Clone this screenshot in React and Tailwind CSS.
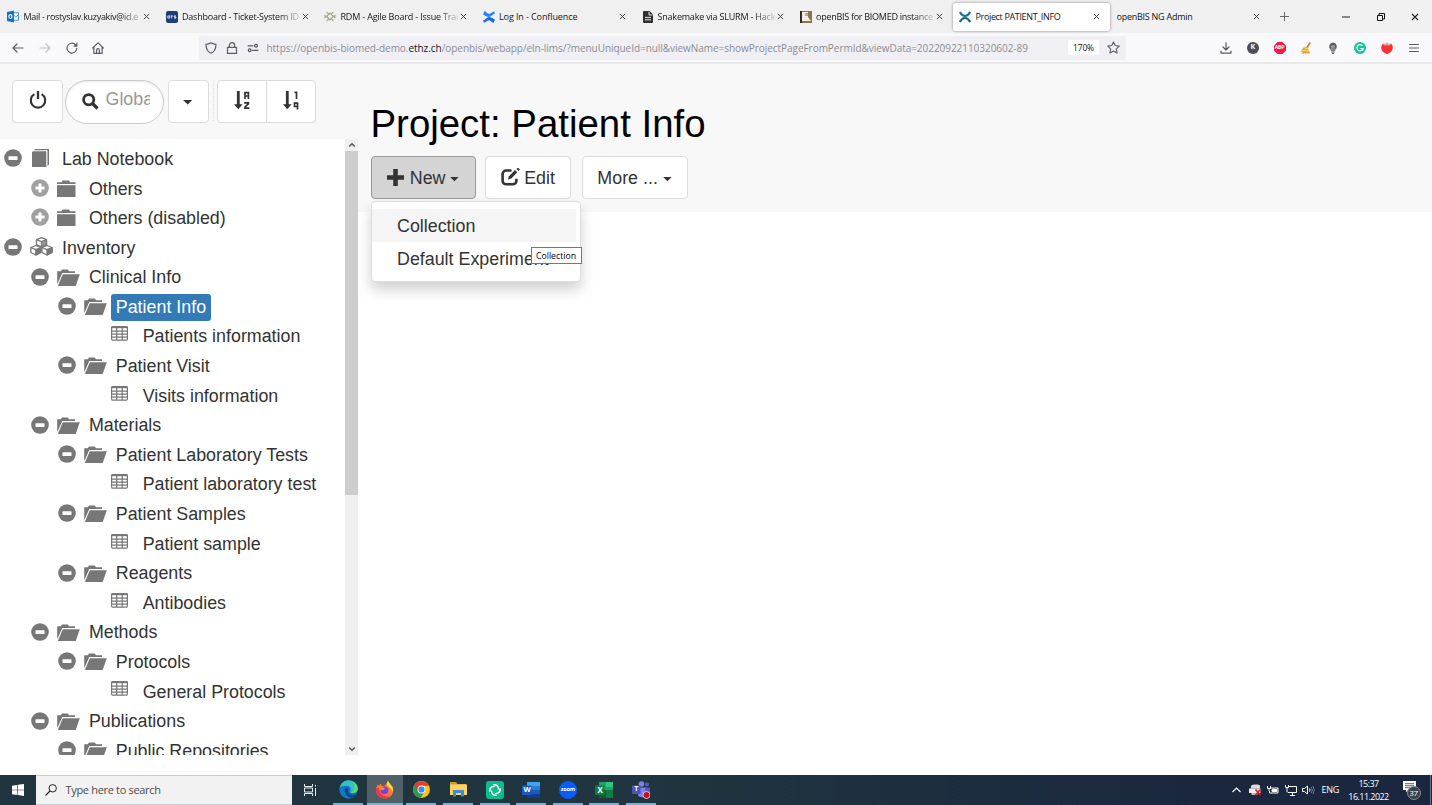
import React from "react";

const UI = "font-['Open_Sans','Noto_Sans',sans-serif]";

/* ---------- shared glyphs ---------- */

function Close({ className = "" }) {
  return (
    <svg viewBox="0 0 8 8" className={`h-[7px] w-[7px] shrink-0 ${className}`}>
      <path d="M1 1l6 6M7 1L1 7" stroke="currentColor" strokeWidth="1.1" fill="none" />
    </svg>
  );
}

function Caret({ className = "" }) {
  return (
    <svg viewBox="0 0 10 5" className={`h-[4.6px] w-[9.4px] shrink-0 ${className}`}>
      <path d="M0 0h10L5 5z" fill="currentColor" />
    </svg>
  );
}

/* ---------- favicons ---------- */

const Outlook = () => (
  <svg viewBox="0 0 13 13" className="h-[13px] w-[13px]">
    <path d="M6 2.5h6.5v8H6z" fill="#fff" stroke="#1479cf" strokeWidth=".9" />
    <path d="M6.5 4.5L9.5 7l3-2.5" stroke="#1479cf" fill="none" strokeWidth=".9" />
    <path d="M0 1.5L7.5 0v13L0 11.5z" fill="#0a72c8" />
    <ellipse cx="3.7" cy="6.6" rx="1.7" ry="2.1" fill="none" stroke="#fff" strokeWidth="1.2" />
  </svg>
);

const Ots = () => (
  <span className="flex h-3 w-3 items-center justify-center rounded-[2px] bg-[#1e3d7b]">
    <svg viewBox="0 0 10 4" className="h-1 w-[10px]">
      <path d="M.8.9h1.8v2.2H.8zM3.6.9h2.2M4.7.9v2.5M9 .9H7.2v1.1H9v1.1H7" fill="none" stroke="#fff" strokeWidth=".8" />
    </svg>
  </span>
);

const Rdm = () => (
  <svg viewBox="0 0 14 13" className="h-[13px] w-[13px]" fill="none" stroke="#9aa87a" strokeWidth="1.3">
    <path d="M7 2.5l4 4-4 4-4-4z" />
    <path d="M3 1.5l2.5 2M11 1.5l-2.5 2M3 11.5l2.5-2M11 11.5l-2.5-2M.5 5l2 1.5-2 1.5M13.5 5l-2 1.5 2 1.5" />
  </svg>
);

const Confluence = () => (
  <svg viewBox="0 0 12 12" className="h-3 w-3">
    <path d="M1.6 0L0 3.2c3 2 5 3 6.6 2.6C8.600 5.400 9.500 3.500 12 2.600L11 .2C8.500 1.500 7 3 5.600 2.800 4.300 2.500 3.400 1 1.600 0z" fill="#2684ff" />
    <path d="M10.400 12L12 8.800c-3-2-5-3-6.600-2.600C3.400 6.600 2.500 8.500 0 9.400l1 2.400C3.500 10.500 5 9 6.400 9.200c1.300.3 2.200 1.800 4 2.800z" fill="#1868f0" />
  </svg>
);

const Doc = () => (
  <svg viewBox="0 0 10 12" className="ml-[1px] h-3 w-[10px]">
    <path d="M1 0h5.500L10 3.500V11a1 1 0 0 1-1 1H1a1 1 0 0 1-1-1V1a1 1 0 0 1 1-1z" fill="#2f2f2f" />
    <path d="M6 .8V4h3.300M2 6.400h6M2 8.800h6" stroke="#eee" strokeWidth="1" fill="none" />
  </svg>
);

const Biomed = () => (
  <svg viewBox="0 0 12 12" className="h-3 w-3">
    <path d="M0 0h12v12H0z" fill="#8a7450" />
    <path d="M2 1h6v9H2z" fill="#f3f1ea" />
    <path d="M0 0h2v12H0z" fill="#2e2a25" />
    <path d="M5 2h3v3H5z" fill="#b9a88a" />
    <path d="M8 6l3 4H7z" fill="#efeadf" />
  </svg>
);

const OpenBis = ({ className = "" }) => (
  <svg viewBox="0 0 12 12" className={`h-3 w-3 ${className}`} fill="none" strokeWidth="2.200">
    <path d="M.8 1c1.800 3 3.500 4 5.200 4S9.400 4 11.200 1" stroke="#1a7199" />
    <path d="M.8 11C2.600 8 4.300 7 6 7s3.400 1 5.200 4" stroke="#155f80" />
  </svg>
);

/* ---------- browser chrome ---------- */

const TABS = [
  { icon: <Outlook />, label: "Mail - rostyslav.kuzyakiv@id.e", fade: true, track: "tracking-[-0.3px]" },
  { icon: <Ots />, label: "Dashboard - Ticket-System ID-", fade: true, track: "tracking-[-0.23px]" },
  { icon: <Rdm />, label: "RDM - Agile Board - Issue Trac", fade: true, track: "tracking-[-0.18px]" },
  { icon: <Confluence />, label: "Log In - Confluence", track: "tracking-[-0.1px]" },
  { icon: <Doc />, label: "Snakemake via SLURM - Hack", fade: true, track: "tracking-[-0.2px]" },
  { icon: <Biomed />, label: "openBIS for BIOMED instance", fade: true, track: "tracking-[-0.27px]" },
  { icon: <OpenBis />, label: "Project PATIENT_INFO", active: true, track: "tracking-[-0.35px]" },
  { label: "openBIS NG Admin", track: "tracking-[-0.25px]" },
];

function Tab({ icon, label, fade, active, track }) {
  return (
    <div
      className={`flex h-7 shrink-0 items-center pr-[9.500px] pl-[6px] ${
        active ? "relative z-10 mx-px w-[156.500px] rounded-[3px] bg-white shadow-[0_0_3px_rgba(0,0,0,.45)]" : "w-[158.500px]"
      }`}
    >
      {icon && <span className="mr-[4.500px] flex w-3 shrink-0 justify-center">{icon}</span>}
      <span
        className={`min-w-0 flex-1 overflow-hidden whitespace-nowrap text-[9px] text-[#15141a] ${track} ${
          fade ? "[mask-image:linear-gradient(to_right,black_82%,rgba(0,0,0,.15))]" : ""
        }`}
      >
        {label}
      </span>
      <Close className="ml-[2px] text-[#3b3b42]" />
    </div>
  );
}

function TabBar() {
  return (
    <div className="flex h-[33px] items-center bg-[#f0f0f0] pl-px">
      {TABS.map((t) => (
        <Tab key={t.label} {...t} />
      ))}
      <div className="flex flex-1 items-center pl-[10px]">
        <svg viewBox="0 0 10 10" className="ml-[1px] h-[9px] w-[9px]" stroke="#55555c" fill="none">
          <path d="M5 0v10M0 5h10" />
        </svg>
        <svg viewBox="0 0 8 8" className="ml-[53px] h-2 w-2" stroke="#222" fill="none">
          <path d="M0 4h8" />
        </svg>
        <svg viewBox="0 0 8 8" className="ml-[26.500px] h-2 w-2" stroke="#111" fill="none">
          <path d="M.5 2.500h5v5h-5zM2 2V.5h5.500V6H6" />
        </svg>
        <Close className="ml-[26px] h-2! w-2! text-[#222]" />
      </div>
    </div>
  );
}

function NavBar() {
  const s = { fill: "none", stroke: "#5b5b66", strokeWidth: 1.2, strokeLinecap: "round", strokeLinejoin: "round" };
  return (
    <div className="flex h-[31px] items-center border-b-2 border-[#e9e9ec] bg-[#f9f9fb] pl-3">
      <svg viewBox="0 0 12 12" className="h-3 w-3" {...s}><path d="M11 6H1M5 2L1 6l4 4" /></svg>
      <svg viewBox="0 0 12 12" className="ml-[15px] h-3 w-3" {...s} stroke="#c3c3c8"><path d="M1 6h10M7 2l4 4-4 4" /></svg>
      <svg viewBox="0 0 12 12" className="ml-[15px] h-3 w-3" {...s}><path d="M10.800 6.300A4.900 4.900 0 1 1 9.500 2.800" /><path d="M11.200 1v3.400H7.800z" fill="#5b5b66" strokeWidth=".5" /></svg>
      <svg viewBox="0 0 12 12" className="ml-[14px] h-3 w-3" {...s}><path d="M.7 6L6 .9 11.300 6M1.900 5v6.300h8.200V5M4.600 11V8a1.400 1.400 0 0 1 2.800 0v3" /></svg>

      <div className="ml-[95px] flex h-6 w-[927px] items-center rounded-[3px] bg-[#f0f0f4] pl-[6px]">
        <svg viewBox="0 0 12 12" className="h-3 w-3" {...s}><path d="M6 .7c1.600 1 3.200 1.500 5 1.600C11 6.500 9.500 9.800 6 11.300 2.500 9.800 1 6.500 1 2.300 2.800 2.200 4.400 1.700 6 .7z" /></svg>
        <svg viewBox="0 0 12 12" className="ml-[9px] h-3 w-3" {...s}><path d="M1.500 5.300h9v6h-9zM3.400 5V3.300a2.600 2.600 0 0 1 5.200 0V5" /></svg>
        <svg viewBox="0 0 12 12" className="ml-[9px] h-3 w-3" {...s}><path d="M1 3.800h5M5.500 8.300H11" /><circle cx="9" cy="3.800" r="1.400" /><circle cx="2.700" cy="8.300" r="1.400" /></svg>
        <span className="mt-px ml-[7.500px] w-[800px] whitespace-nowrap text-[10px] tracking-[-0.043px] text-[#8b8b93]">
          https://openbis-biomed-demo.<span className="text-[#15141a]">ethz.ch</span>
          /openbis/webapp/eln-lims/?menuUniqueId=null&amp;viewName=showProjectPageFromPermId&amp;viewData=20220922110320602-89
        </span>
        <span className="ml-[1.500px] flex h-[15px] w-[31px] items-center justify-center rounded-[2px] bg-white pt-px text-[8.500px] tracking-[-0.2px] text-[#15141a]">170%</span>
        <svg viewBox="0 0 12 12" className="ml-[8px] h-[13px] w-[13px]" {...s} strokeWidth="1"><path d="M6 .8l1.600 3.400 3.700.5-2.700 2.600.7 3.700L6 9.200 2.700 11l.7-3.700L.7 4.700l3.700-.5z" /></svg>
      </div>

      <div className="ml-[94px] flex items-center gap-[14.800px]">
        <svg viewBox="0 0 12 12" className="h-3 w-3" {...s}><path d="M6 .8v7M3 5l3 3 3-3M1 9v2.200h10V9" /></svg>
        <span className="flex h-3 w-3 items-center justify-center rounded-full bg-[#4b4e5a] text-[7px] font-bold text-white">K</span>
        <span className="relative flex h-3 w-3 items-center justify-center">
          <svg viewBox="0 0 12 12" className="absolute inset-0 h-3 w-3"><path d="M3.500 0h5L12 3.500v5L8.500 12h-5L0 8.500v-5z" fill="#ed1e45" /></svg>
          <span className="relative text-[5px] font-bold tracking-[-0.1px] text-white">ABP</span>
        </span>
        <svg viewBox="0 0 12 12" className="h-3 w-3"><path d="M9.500 0l1.500 1-3 5 2 5.500H1.500L3 9.500 1 10l1-2.500L4.500 4.500 6.500 5z" fill="#e0a049" /><path d="M4 5.500l5 2M2.500 8.500l7 .5" stroke="#fbe36a" strokeWidth="1" /><path d="M10 .5L6.800 5.200" stroke="#b8703a" /></svg>
        <svg viewBox="0 0 12 12" className="h-3 w-3"><path d="M6 .5a4 4 0 0 0-2.200 7.200V9h4.400V7.700A4 4 0 0 0 6 .5z" fill="#5f5f5f" /><path d="M4.600 4h2.800M5 4v4.500M7 4v4.500" stroke="#ddd" strokeWidth=".7" /><path d="M4.300 10h3.400M5 11.500h2" stroke="#555" /></svg>
        <svg viewBox="0 0 12 12" className="h-3 w-3"><circle cx="6" cy="6" r="6" fill="#15c39a" /><path d="M8.500 3.900A3.100 3.100 0 1 0 9 6.500H6.500M9 6.500v2.200" fill="none" stroke="#fff" strokeWidth="1.100" /></svg>
        <svg viewBox="0 0 12 12" className="h-3 w-3"><path d="M1.500 2L4 2.800 6 1l2 1.800L10.500 2C13 5 12 10.500 6 12 0 10.500-1 5 1.500 2z" fill="#f83232" /><path d="M1.800 1l2.700.7L6 0l1.500 1.700 2.700-.7-1.700 2.500-2.500-.3-2.500.3z" fill="#f6a3a0" /></svg>
        <svg viewBox="0 0 12 12" className="h-3 w-3" {...s} strokeWidth="1"><path d="M1.500 2.500h9M1.500 6h9M1.500 9.500h9" /></svg>
      </div>
    </div>
  );
}

/* ---------- tree ---------- */

const Toggle = ({ open }) => (
  <svg viewBox="0 0 18 18" className="h-[18px] w-[18px] shrink-0">
    <circle cx="9" cy="9" r="8.800" fill={open ? "#777" : "#a0a0a0"} />
    {open ? (
      <rect x="4.500" y="7.200" width="9" height="3.800" rx=".6" fill="#fff" />
    ) : (
      <path d="M7.500 4.500h3v3h3v3h-3v3h-3v-3h-3v-3h3z" fill="#fff" />
    )}
  </svg>
);

const ICONS = {
  book: (
    <svg viewBox="0 0 17 18" className="-mt-[2px] ml-[2px] h-[18px] w-[17px]">
      <path d="M3 0H17v15.500l-1.500 1.500V1.300H1.700z" fill="#777" />
      <path d="M0 3l1-.8h13.300V18H0z" fill="#777" />
    </svg>
  ),
  folder: (
    <svg viewBox="0 0 19 17" className="-mt-[1px] h-[17px] w-[19px]">
      <path d="M0 4V2.300h4.500L5.500 0.500h6.500l1 1.800h5.500V4z" fill="#777" />
      <path d="M0 5.200h18.500V17H0z" fill="#777" />
    </svg>
  ),
  open: (
    <svg viewBox="0 0 23 17" className="-mt-[1px] h-[17px] w-[23px]">
      <path d="M.2 14.500V2.300h3.600L5 .6h5.800L12 2.300h6V4H5.300L.6 14.500z" fill="#777" />
      <path d="M5.800 5.200h17L18.700 17H.8z" fill="#777" />
    </svg>
  ),
  cubes: (
    <svg viewBox="0 0 23 19" className="-mt-[4px] h-[19px] w-[23px]" fill="#fff" stroke="#777" strokeWidth="1.300" strokeLinejoin="round">
      <path d="M6.500 2.700l5-2 5 2v5l-5 2.300-5-2.300z" />
      <path d="M11.500 4.700L16.500 2.700v5l-5 2.300z" fill="#999" />
      <path d="M.8 10.500l5-2 5 2v5l-5 2.500-5-2.500z" />
      <path d="M5.800 12.700l5-2.200v5l-5 2.500z" fill="#777" />
      <path d="M12 10.500l5-2 5 2v5l-5 2.500-5-2.500z" />
      <path d="M17 12.700l5-2.200v5L17 18z" fill="#777" />
      <path d="M6.500 2.700l5 2M.8 10.500l5 2.200M12 10.500l5 2.200" />
    </svg>
  ),
  table: (
    <svg viewBox="0 0 17 15" className="-mt-[6px] h-[15px] w-[17px]" fill="none" stroke="#777">
      <rect x=".6" y=".6" width="15.800" height="13.500" rx="1" strokeWidth="1.200" />
      <path d="M.6 1.300h16" strokeWidth="1.800" />
      <path d="M.6 5.200h16M.6 8.200h16M.6 11.200h16M5.700 1v13M11.200 1v13" strokeWidth="1.200" />
    </svg>
  ),
};

const INDENT = ["pl-[3.800px]", "pl-[30.700px]", "pl-[57.600px]", "pl-[84.500px]"];

const NODES = [
  [0, "open", "book", "Lab Notebook"],
  [1, "closed", "folder", "Others"],
  [1, "closed", "folder", "Others (disabled)"],
  [0, "open", "cubes", "Inventory"],
  [1, "open", "open", "Clinical Info"],
  [2, "open", "open", "Patient Info", true],
  [3, null, "table", "Patients information"],
  [2, "open", "open", "Patient Visit"],
  [3, null, "table", "Visits information"],
  [1, "open", "open", "Materials"],
  [2, "open", "open", "Patient Laboratory Tests"],
  [3, null, "table", "Patient laboratory test"],
  [2, "open", "open", "Patient Samples"],
  [3, null, "table", "Patient sample"],
  [2, "open", "open", "Reagents"],
  [3, null, "table", "Antibodies"],
  [1, "open", "open", "Methods"],
  [2, "open", "open", "Protocols"],
  [3, null, "table", "General Protocols"],
  [1, "open", "open", "Publications"],
  [2, "open", "open", "Public Repositories"],
];

function TreeRow({ node: [level, state, icon, label, selected] }) {
  return (
    <li className={`flex h-[29.600px] shrink-0 items-center ${INDENT[level]}`}>
      <span className="-mt-[2px] w-[18px] shrink-0">{state && <Toggle open={state === "open"} />}</span>
      <span className="ml-[8.500px] flex w-[27px] shrink-0 items-center">{ICONS[icon]}</span>
      <span
        className={`flex h-[27px] items-center rounded-[3px] px-[4.700px] whitespace-nowrap ${
          selected ? "bg-[#337ab7] text-white" : "text-[#333]"
        }`}
      >
        {label}
      </span>
    </li>
  );
}

const BTN = "flex items-center justify-center rounded-[4px] border border-[#dcdcdc] bg-white text-[#333]";

function Sidebar() {
  return (
    <aside className="flex w-[358px] shrink-0 flex-col">
      <div className="flex h-[75px] shrink-0 items-start bg-[#f8f8f8] pt-[15.500px] pl-[12px]">
        <button className={`${BTN} h-[43px] w-[51px]`}>
          <svg viewBox="0 0 18 18" className="-mt-[3px] h-[18px] w-[18px]" fill="none" stroke="#333">
            <path d="M5.400 3.200a7.200 7.200 0 1 0 7.200 0" strokeWidth="2.100" />
            <path d="M9 0v8" strokeWidth="2.300" />
          </svg>
        </button>
        <div className="ml-[2px] flex h-[44px] w-[99px] items-center rounded-[22px] border border-[#ccc] bg-white pl-[16px] shadow-[inset_0_1px_2px_rgba(0,0,0,.1)]">
          <svg viewBox="0 0 17 17" className="h-[17px] w-[17px]" fill="none" stroke="#333">
            <circle cx="6.700" cy="6.700" r="5.100" strokeWidth="2.800" />
            <path d="M10.500 10.500l5 5" strokeWidth="3.200" />
          </svg>
          <span className="-mt-[4px] ml-[6.500px] w-[44px] overflow-hidden text-[17.850px] whitespace-nowrap text-[#999]">Global</span>
        </div>
        <button className={`${BTN} ml-[3.500px] h-[43px] w-[41px] pt-[3px]`}><Caret className="-ml-px" /></button>
        <span className="ml-[4px] h-[41px] border-l border-dotted border-[#ddd]" />
        <div className="ml-[3.500px] flex">
          <button className={`${BTN} h-[43px] w-[50px] rounded-r-none`}>
            <svg viewBox="0 0 16 19" className="-mt-[2px] h-[19px] w-[16px]" fill="none" stroke="#333">
              <path d="M4.300 0v14" strokeWidth="2.800" /><path d="M0 13.200h8.600L4.300 18.300z" fill="#333" stroke="none" />
              <path d="M11 8V1.600h3.400V8M11 5h3.400M10.200 11.800h4.200v1L11 16v1.200h4.400" strokeWidth="1.700" />
            </svg>
          </button>
          <button className={`${BTN} -ml-px h-[43px] w-[50px] rounded-l-none`}>
            <svg viewBox="0 0 16 19" className="-mt-[2px] h-[19px] w-[16px]" fill="none" stroke="#333">
              <path d="M4.300 0v14" strokeWidth="2.800" /><path d="M0 13.200h8.600L4.300 18.300z" fill="#333" stroke="none" />
              <path d="M11.500 1.300h2V8M14.500 18.500v-6.300h-3v3.300h3" strokeWidth="1.700" />
            </svg>
          </button>
        </div>
      </div>
      <div className="flex h-[616px]">
        <ul className="flex flex-1 flex-col overflow-hidden pt-[5.500px] text-[17.850px]">
          {NODES.map((n) => (
            <TreeRow key={n[3]} node={n} />
          ))}
        </ul>
        <div className="flex w-[13px] shrink-0 flex-col items-center bg-[#f0f0f0]">
          <svg viewBox="0 0 8 12" className="h-3 w-2" fill="none" stroke="#555" strokeWidth="1.500"><path d="M1.200 7.500L4 4.700l2.800 2.800" /></svg>
          <div className="h-[344px] w-[13px] bg-[#cdcdcd]" />
          <div className="flex-1" />
          <svg viewBox="0 0 8 12" className="h-3 w-2" fill="none" stroke="#555" strokeWidth="1.500"><path d="M1.200 4.500L4 7.300l2.800-2.800" /></svg>
        </div>
      </div>
    </aside>
  );
}

/* ---------- main pane ---------- */

function Main() {
  return (
    <main className="flex flex-1 flex-col bg-white">
      <header className="flex h-[148px] flex-col bg-[#f8f8f8] pt-[36px] pl-[12.500px]">
        <h1 className="h-[56px] text-[38.400px] leading-[47px] whitespace-nowrap text-black">Project: Patient Info</h1>
        <div className="flex text-[17.850px]">
          <div className="relative">
            <button className={`${BTN} h-[43px] w-[105.500px] border-[#999]! bg-[#d4d4d4]!`}>
              <svg viewBox="0 0 17 17" className="h-[17px] w-[17px]"><path d="M6.200 0h4.600v6.200H17v4.600h-6.200V17H6.200v-6.200H0V6.200h6.200z" fill="#333" /></svg>
              <span className="mt-[2px] ml-[5.500px]">New</span>
              <Caret className="mt-[4px] ml-[5px] h-[4.200px]! w-[8.800px]!" />
            </button>
            <div className="absolute top-[45px] left-0 z-20 h-[81px] w-[210px] rounded-[4px] border border-[#ddd] bg-white pt-[7px] shadow-[0_8px_14px_rgba(0,0,0,.18)]">
              <div className="flex h-[33px] w-[204px] items-center bg-[#f5f5f5] pt-[2px] pl-[25.500px] text-[#333]">Collection</div>
              <div className="flex h-[33px] items-center pt-[2px] pl-[25.500px] whitespace-nowrap text-[#333]">Default Experiment</div>
              <div className={`absolute top-[45px] left-[159px] flex h-[17px] w-[51px] items-center justify-center border border-[#767676] bg-white pt-[2px] text-[8.700px] text-black ${UI}`}>
                Collection
              </div>
            </div>
          </div>
          <button className={`${BTN} ml-[9px] h-[43px] w-[86px]`}>
            <svg viewBox="0 0 19 18" className="-mt-[2px] h-[18px] w-[19px]" fill="none" stroke="#333">
              <path d="M10.500 2.500H5.200a3.600 3.600 0 0 0-3.600 3.600v6.600a3.600 3.600 0 0 0 3.600 3.600h6.600a3.600 3.600 0 0 0 3.600-3.600v-2" strokeWidth="2.600" />
              <path d="M7 11.500l1-3.200 6-6.300 2.300 2.200-6 6.300z" fill="#333" stroke="none" />
              <path d="M16.200.300l2 2" strokeWidth="2.200" />
            </svg>
            <span className="mt-[2px] ml-[4px]">Edit</span>
          </button>
          <button className={`${BTN} ml-[10.500px] h-[43px] w-[106px]`}>
            <span className="mt-[2px]">More ...</span>
            <Caret className="mt-[4px] ml-[5px] h-[4.200px]! w-[8.800px]!" />
          </button>
        </div>
      </header>
    </main>
  );
}

/* ---------- taskbar ---------- */

const APPS = [
  ["edge", (
    <svg viewBox="0 0 19 19" className="h-[19px] w-[19px]">
      <circle cx="9.500" cy="9.500" r="9.200" fill="#1576c8" />
      <path d="M.8 7.500C2 2.500 6 .3 9.500.3c5.500 0 9.300 4.200 9.200 8.200 0 3-2.500 4.500-5 4.500-2 0-3-.8-2.300-1.800C13 9 11 5.800 7.500 5.800 4.500 5.800 2 6.500.8 7.500z" fill="#35c1c4" />
      <path d="M13 1.200c3.600 1.500 5.800 4.500 5.700 7.300 0 3-2.500 4.500-5 4.500-1 0-2-.3-2.300-.8 3 0 4.500-2 4.300-4.500C15.500 5 14.500 3 13 1.200z" fill="#62d86b" />
      <path d="M7 7.500c-3 3.500 0 9.500 5.500 10.500 2-.5 4-2 5-4-6 2.500-9.500-1.500-8-5z" fill="#0b4a8e" />
    </svg>
  )],
  ["firefox", (
    <svg viewBox="0 0 19 19" className="h-[19px] w-[19px]">
      <path d="M13 .8c1 2 1 2.200 2.500 3.700C18 7 18.500 9 18 12c-.8 4-4 6.500-8.300 6.500C4.500 18.500 1 14.800 1 10c0-2.500 1-4.500 2-6l.5 2L6 3.500l.5 2.300 3 .2z" fill="#ff7a2a" />
      <path d="M1 10c0 5 3.500 8.500 8.700 8.500 2.500 0 4.500-.8 6-2.200-5 1-11-.3-12.200-9.300C2 8 1 8.500 1 10z" fill="#f2315c" />
      <path d="M13 .8c1 2 1 2.200 2.500 3.700C18 7 18.500 9 18 12c-1-3-4-5-6-6.500 0-1.500 0-3 1-4.700z" fill="#ffdc3e" />
      <circle cx="9.500" cy="10.300" r="3.900" fill="#7542e5" />
      <path d="M5.500 8c1.500-1 3-.5 4.500.5-1 1.200-2.500 1.500-3.500 1.500z" fill="#ff9640" />
    </svg>
  )],
  ["chrome", (
    <svg viewBox="0 0 18 18" className="h-[17px] w-[17px]">
      <circle cx="9" cy="9" r="9" fill="#fbc116" />
      <path d="M9 9L1.200 4.500A9 9 0 0 0 8 17.900l4-6.500z" fill="#2a9e48" />
      <path d="M9 5h7.900A9 9 0 0 0 1.200 4.500L5.500 11z" fill="#e33b2e" />
      <circle cx="9" cy="9" r="4.200" fill="#fff" /><circle cx="9" cy="9" r="3.300" fill="#4285f4" />
    </svg>
  )],
  ["explorer", (
    <svg viewBox="0 0 17 15" className="h-[15px] w-[17px]">
      <path d="M0 0h6l1.500 2H16v3H0z" fill="#d99a24" /><path d="M0 2.500h17V13H0z" fill="#fbd368" />
      <path d="M3 8h11v6.500h-3V11H6v3.500H3z" fill="#3c8dd0" />
    </svg>
  )],
  ["element", (
    <svg viewBox="0 0 18 18" className="h-[18px] w-[18px]" fill="none" stroke="#fff" strokeWidth="1.500" strokeLinecap="round">
      <rect width="18" height="18" rx="3" fill="#0dbd8b" stroke="none" />
      <path d="M7.800 3.800c3 0 4.700 1.700 4.700 4.200" />
      <path d="M14.200 7.800c0 3-1.700 4.700-4.200 4.700" />
      <path d="M10.200 14.200c-3 0-4.700-1.700-4.700-4.200" />
      <path d="M3.800 10.200c0-3 1.700-4.700 4.200-4.700" />
    </svg>
  )],
  ["word", (
    <span className="relative flex h-4 w-[18px]">
      <svg viewBox="0 0 18 16" className="h-4 w-[18px]">
        <path d="M5 0h13v4H5z" fill="#41a5ee" /><path d="M5 4h13v4H5z" fill="#2b7cd3" /><path d="M5 8h13v4H5z" fill="#185abd" /><path d="M5 12h13v4H5z" fill="#103f91" />
        <path d="M0 3.500h9.500V13H0z" fill="#185abd" />
      </svg>
      <span className="absolute top-[3.500px] left-0 w-[9.500px] text-center text-[7.500px] leading-[9px] font-bold text-white">W</span>
    </span>
  )],
  ["zoom", (
    <span className="flex h-[18px] w-[18px] items-center justify-center rounded-full bg-[#0b5cff] pb-px text-[5.500px] font-bold tracking-[-0.2px] text-white">zoom</span>
  )],
  ["excel", (
    <span className="relative flex h-4 w-[18px]">
      <svg viewBox="0 0 18 16" className="h-4 w-[18px]">
        <path d="M4 0h14v16H4z" fill="#21a366" /><path d="M11 0h7v5h-7z" fill="#33c481" /><path d="M4 8h7v8H4z" fill="#185c37" /><path d="M11 8h7v8h-7z" fill="#107c41" />
        <path d="M0 3.500h9.500V13H0z" fill="#107c41" />
      </svg>
      <span className="absolute top-[3.500px] left-0 w-[9.500px] text-center text-[8px] leading-[9px] font-bold text-white">X</span>
    </span>
  )],
  ["teams", (
    <span className="relative flex h-[18px] w-[18px]">
      <svg viewBox="0 0 18 18" className="h-[18px] w-[18px]">
        <circle cx="9.500" cy="3" r="2.800" fill="#7b83eb" /><circle cx="15" cy="3.500" r="2" fill="#5059c9" />
        <path d="M6 6.500h8V12a4.500 4.500 0 0 1-8 2.500z" fill="#7b83eb" /><path d="M13 6.500h5v5a3 3 0 0 1-4 2z" fill="#5059c9" />
        <path d="M0 4.500h8.500V13H0z" fill="#4b53bc" />
        <circle cx="14.500" cy="14" r="3.500" fill="#c50f1f" stroke="#e8e0e6" strokeWidth=".8" />
      </svg>
      <span className="absolute top-[4.500px] left-0 w-[8.500px] text-center text-[7px] leading-[8.500px] font-bold text-white">T</span>
    </span>
  )],
];

function Taskbar() {
  return (
    <footer className={`flex h-[30px] items-stretch bg-linear-to-r from-[#20353f] from-45% to-[#1a273f] to-85% ${UI}`}>
      <div className="flex w-9 items-center justify-center">
        <svg viewBox="0 0 12 12" className="h-3 w-3" fill="#fff"><path d="M0 1.700l5.300-.8v4.800H0zM5.900.8L12 0v5.700H5.900zM0 6.300h5.300v4.800L0 10.300zM5.900 6.300H12V12l-6.100-.9z" /></svg>
      </div>
      <div className="flex w-[256px] items-center border-y border-[#c9cdd0] bg-[#f2f2f2] pl-[9px]">
        <svg viewBox="0 0 12 12" className="h-3 w-3" fill="none" stroke="#222"><circle cx="7.700" cy="4.300" r="3.700" /><path d="M5 7L.5 11.500" strokeWidth="1.100" /></svg>
        <span className="mt-px ml-[8.500px] text-[11px] tracking-[-0.320px] text-[#4c4c4c]">Type here to search</span>
      </div>
      <div className="flex w-[38px] items-center justify-center">
        <svg viewBox="0 0 13 12" className="-ml-[2px] h-3 w-[13px]" fill="none" stroke="#e8ecee"><path d="M.5 0v2.500h8V0M.5 12V9.500h8V12M.5 4h8v4h-8zM11.500 4v8M11.500 1v1.500" /></svg>
      </div>
      <div className="flex">
        {APPS.map(([name, icon]) => (
          <div
            key={name}
            className={`flex w-[36.600px] flex-col items-center ${name === "firefox" ? "bg-[#4f6068]" : ""}`}
          >
            <div className="flex flex-1 items-center pt-px">{icon}</div>
            <div className={`h-[2px] bg-[#76b0dd] ${name === "firefox" ? "w-full" : "w-[30px]"}`} />
          </div>
        ))}
      </div>
      <div className="flex-1" />
      <div className="flex items-center text-white">
        <svg viewBox="0 0 9 6" className="h-[6px] w-[9px]" fill="none" stroke="#fff" strokeWidth="1.100"><path d="M.5 5l4-4 4 4" /></svg>
        <svg viewBox="0 0 13 12" className="ml-[8px] h-3 w-[13px]">
          <path d="M2 1.500L5 .5h4l2 1v3H2z" fill="#ddd" /><path d="M0 4.500h11.500V9H0z" fill="#f0f0f0" /><path d="M2.500 9h6v2h-6z" fill="#bbb" />
          <path d="M6.500 5.500l5 5.500M11.500 5.500l-5 5.500" stroke="#e01b24" strokeWidth="1.700" />
        </svg>
        <svg viewBox="0 0 12 12" className="ml-[5px] h-3 w-3" fill="none" stroke="#fff"><path d="M3.500 4H11v5H2.500V7" /><path d="M5 5.500h5v2H5z" fill="#fff" /><path d="M.5 2v2.500h3V2M2 4.500V7" /></svg>
        <svg viewBox="0 0 12 12" className="ml-[6px] h-3 w-3" fill="none" stroke="#fff"><path d="M4 2.500h7.500v6H3M7.500 8.500V11M5 11.500h5" /><path d="M.5 1v2.500h3V1M2 3.500V8.500" /></svg>
        <svg viewBox="0 0 13 12" className="ml-[5px] h-3 w-[13px]" fill="none" stroke="#fff"><path d="M.5 4.500h2l3-2.500v8l-3-2.500h-2zM7.500 4.500q1 1.500 0 3" /><path d="M9.300 3q2 3 0 6M11 2q2.500 4 0 8" stroke="#8791a3" strokeWidth=".8" /></svg>
        <span className="ml-[7px] w-[18px] text-[9px] tracking-[-0.3px]">ENG</span>
        <div className="ml-[6px] flex w-[46px] flex-col items-center text-[9px] leading-[13px] tracking-[-0.55px] whitespace-nowrap">
          <span>15:37</span>
          <span>16.11.2022</span>
        </div>
        <div className="relative ml-[11px] h-[19px] w-[24px]">
          <svg viewBox="0 0 13 13" className="h-[13px] w-[13px]"><path d="M0 0h13v9H5l-2 2.500V9H0z" fill="#fff" /><path d="M2 2.700h9M2 4.700h9M2 6.700h5" stroke="#2a3550" strokeWidth=".8" /></svg>
          <span className="absolute top-[5px] left-[4px] flex h-[14px] w-[14px] items-center justify-center rounded-full border border-[#838992] bg-[#3c4148] text-[8px] tracking-[-0.3px]">37</span>
        </div>
        <span className="mr-[1.500px] ml-[3px] h-[30px] border-l border-[#66708a]" />
      </div>
    </footer>
  );
}

export default function App() {
  return (
    <div className="flex h-[805px] w-[1432px] flex-col overflow-hidden bg-white font-['Liberation_Sans',Arial,sans-serif]">
      <div className={UI}>
        <TabBar />
        <NavBar />
      </div>
      <div className="flex h-[711px]">
        <Sidebar />
        <Main />
      </div>
      <Taskbar />
    </div>
  );
}
